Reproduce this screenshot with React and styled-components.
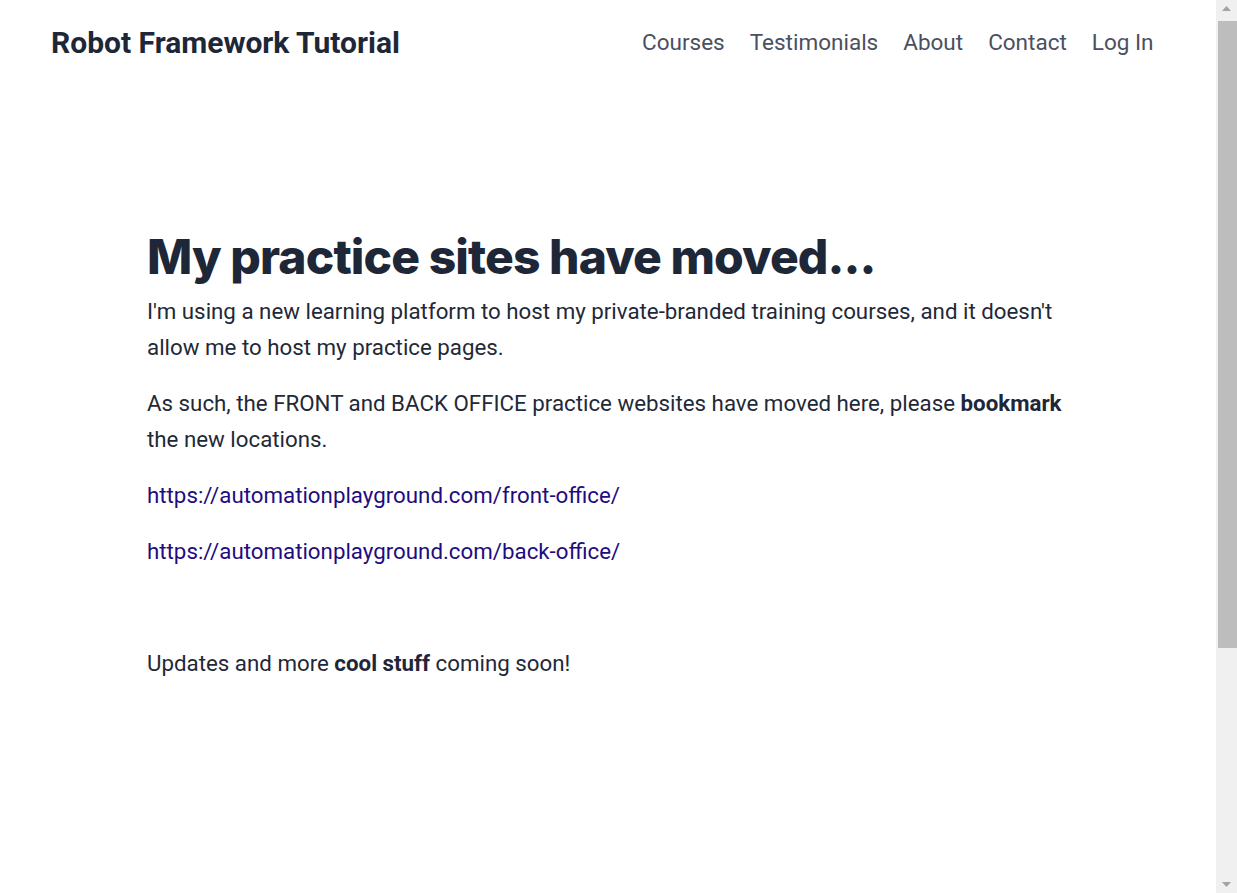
import React from 'react'
import styled, { createGlobalStyle } from 'styled-components'

const GlobalStyle = createGlobalStyle`
  html, body {
    margin: 0;
    padding: 0;
    background: #ffffff;
    overflow: hidden;
  }
  body {
    font-family: Roboto, "Liberation Sans", Arial, sans-serif;
    color: #1f2937;
  }
`

const Frame = styled.div`
  display: flex;
  height: 100vh;
  overflow: hidden;
`

const Page = styled.div`
  flex: 1;
  min-width: 0;
  display: flex;
  flex-direction: column;
`

// fake browser scrollbar, the page in the shot is scrolled to the top
const ScrollBar = styled.div`
  width: 21px;
  flex: none;
  background: #f0f0f0;
  display: flex;
  flex-direction: column;
  align-items: center;
`

const Arrow = styled.div`
  height: 17px;
  width: 100%;
  display: flex;
  align-items: center;
  justify-content: center;
  flex: none;
`

const Thumb = styled.div`
  width: 19px;
  height: 627px;
  margin: 4px 0 0 2px;
  background: #bdbdbd;
  align-self: flex-start;
`

const Spacer = styled.div`
  flex: 1;
`

const Header = styled.header`
  display: flex;
  align-items: center;
  justify-content: space-between;
  height: 84px;
  padding: 0 50px 0 51px;
`

const Brand = styled.a`
  font-family: Roboto, "Liberation Sans", sans-serif;
  font-weight: 700;
  font-size: 30px;
  color: #1e2737;
  text-decoration: none;
`

const Nav = styled.nav`
  display: flex;
  align-items: center;
`

const NavLink = styled.a`
  font-family: Roboto, "Liberation Sans", sans-serif;
  font-size: 22.5px;
  color: #4a5060;
  text-decoration: none;
  padding: 0 12.5px;
`

const Main = styled.main`
  max-width: 922px;
  width: 100%;
  margin: 0 auto;
  padding-top: 145px;
`

const Title = styled.h1`
  font-family: Inter, "Noto Sans", sans-serif;
  font-weight: 800;
  font-size: 48px;
  line-height: 56px;
  letter-spacing: -0.9px;
  color: #1e2737;
  margin: 0 0 8px 0;
`

const Para = styled.p`
  font-size: 22.3px;
  line-height: 36px;
  margin: 0 0 20px;
  color: #1f2937;

  b {
    font-weight: 700;
    color: #1e2737;
  }
`

const Link = styled.a`
  color: #1f0c80;
  text-decoration: none;
`

const Triangle = ({ up }) => (
  <svg width="9" height="5" viewBox="0 0 9 5">
    <path d={up ? 'M0 5 L4.5 0 L9 5 Z' : 'M0 0 L4.5 5 L9 0 Z'} fill="#a3a3a3" />
  </svg>
)

export default function App() {
  return (
    <Frame>
      <GlobalStyle />
      <Page>
        <Header>
          <Brand href="#">Robot Framework Tutorial</Brand>
          <Nav>
            <NavLink href="#">Courses</NavLink>
            <NavLink href="#">Testimonials</NavLink>
            <NavLink href="#">About</NavLink>
            <NavLink href="#">Contact</NavLink>
            <NavLink href="#">Log In</NavLink>
          </Nav>
        </Header>
        <Main>
          <Title>My practice sites have moved...</Title>
          <Para>
            I'm using a new learning platform to host my private-branded training courses, and it doesn't allow me to host my practice pages.
          </Para>
          <Para>
            As such, the FRONT and BACK OFFICE practice websites have moved here, please <b>bookmark</b> the new locations.
          </Para>
          <Para>
            <Link href="#">https://automationplayground.com/front-office/</Link>
          </Para>
          <Para>
            <Link href="#">https://automationplayground.com/back-office/</Link>
          </Para>
          <Para>&nbsp;</Para>
          <Para>
            Updates and more <b>cool stuff</b> coming soon!
          </Para>
        </Main>
      </Page>
      <ScrollBar>
        <Arrow><Triangle up /></Arrow>
        <Thumb />
        <Spacer />
        <Arrow><Triangle /></Arrow>
      </ScrollBar>
    </Frame>
  )
}
